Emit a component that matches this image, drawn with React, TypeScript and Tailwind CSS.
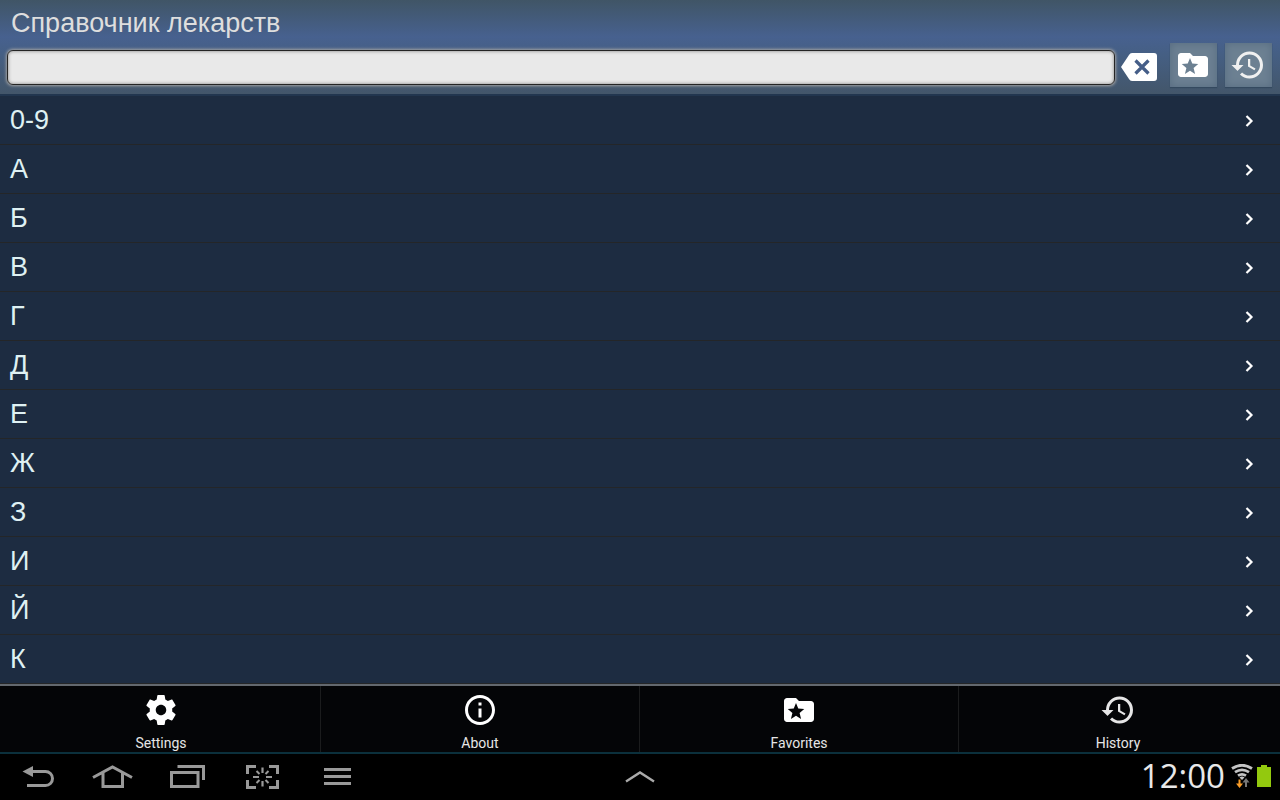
import { useState } from "react";
import type { ReactNode } from "react";
import { MdHistory, MdInfoOutline } from "react-icons/md";

const sections = ["0-9", "А", "Б", "В", "Г", "Д", "Е", "Ж", "З", "И", "Й", "К"];

function FolderStarIcon({ className }: { className?: string }) {
  return (
    <svg viewBox="0 0 24 24" className={className} fill="currentColor" aria-hidden="true">
      <path
        fillRule="evenodd"
        d="M20 6h-8l-2-2H4c-1.1 0-2 .9-2 2v12c0 1.1.9 2 2 2h16c1.1 0 2-.9 2-2V8c0-1.1-.9-2-2-2zM10 7.3l1.5 3.7 4 .4-3.1 2.6 1 4-3.4-2.1L6.6 18l1-4-3.1-2.6 4-.4z"
      />
    </svg>
  );
}

function GearIcon({ className }: { className?: string }) {
  return (
    <svg viewBox="0 0 24 24" className={className} fill="currentColor" aria-hidden="true">
      <path d="M19.43 12.98c.04-.32.07-.64.07-.98s-.03-.66-.07-.98l2.11-1.65c.19-.15.24-.42.12-.64l-2-3.46c-.12-.22-.39-.3-.61-.22l-2.49 1c-.52-.4-1.08-.73-1.69-.98l-.38-2.65C14.46 2.18 14.25 2 14 2h-4c-.25 0-.46.18-.49.42l-.38 2.65c-.61.25-1.17.59-1.69.98l-2.49-1c-.23-.09-.49 0-.61.22l-2 3.46c-.13.22-.07.49.12.64l2.11 1.65c-.04.32-.07.65-.07.98s.03.66.07.98l-2.11 1.65c-.19.15-.24.42-.12.64l2 3.46c.12.22.39.3.61.22l2.49-1c.52.4 1.08.73 1.69.98l.38 2.65c.03.24.24.42.49.42h4c.25 0 .46-.18.49-.42l.38-2.65c.61-.25 1.17-.59 1.69-.98l2.49 1c.23.09.49 0 .61-.22l2-3.46c.12-.22.07-.49-.12-.64l-2.11-1.65zM12 15.5c-1.93 0-3.5-1.57-3.5-3.5s1.57-3.5 3.5-3.5 3.5 1.57 3.5 3.5-1.57 3.5-3.5 3.5z" />
    </svg>
  );
}

function ClearIcon() {
  return (
    <svg viewBox="0 0 36 28" className="h-7 w-9" aria-hidden="true">
      <path d="M11 0H33a3 3 0 0 1 3 3V25a3 3 0 0 1-3 3H11Q9 28 8 26L0 14 8 2Q9 0 11 0z" fill="#fff" />
      <path d="M14.5 7.5l13 13M27.5 7.5l-13 13" stroke="#455e88" strokeWidth="3.2" />
    </svg>
  );
}

function Header() {
  const [query, setQuery] = useState("");

  return (
    <header className="bg-[linear-gradient(#405566_0px,#47618f_37px,#455f84_54px,#43566a_94px)]">
      <h1 className="h-[43px] pt-1 pl-[11px] text-[27px] leading-[38px] text-[#dedede]">
        Справочник лекарств
      </h1>
      <div className="flex h-[51px] items-start pr-2 pl-[7px]">
        <input
          type="text"
          aria-label="Поиск"
          value={query}
          onChange={(e) => setQuery(e.target.value)}
          className="mt-[7px] h-[35px] min-w-0 flex-1 rounded-md border border-[#252525] bg-[#e9e9e9] px-2 text-xl text-black shadow-[0_0_3px_1px_#a3a3a3,inset_0_0_3px_1px_#aaa] outline-none"
        />
        <button type="button" aria-label="Очистить" className="mt-[10px] ml-[6px]" onClick={() => setQuery("")}>
          <ClearIcon />
        </button>
        <button
          type="button"
          aria-label="Избранное"
          className="ml-[13px] flex h-11 w-[47px] items-center justify-center bg-[#6c8092] pr-0.5 text-white shadow-[0_1px_1px_#34495f,inset_0_0_8px_#566b80]"
        >
          <FolderStarIcon className="size-9" />
        </button>
        <button
          type="button"
          aria-label="История"
          className="ml-2 flex h-11 w-[47px] items-center justify-center bg-[#6c8092] pr-0.5 text-[#f0f0f0] shadow-[0_1px_1px_#34495f,inset_0_0_8px_#566b80]"
        >
          <MdHistory className="size-9" />
        </button>
      </div>
    </header>
  );
}

function MenuButton({ label, children }: { label: string; children: ReactNode }) {
  return (
    <button
      type="button"
      className="flex flex-1 flex-col items-center justify-start border-r border-[#1b1c1d] pt-[6px] pb-px font-[Roboto,sans-serif] text-sm leading-4 text-[#e6e6e6] last:border-transparent"
    >
      {children}
      <span className="mt-[7px]">{label}</span>
    </button>
  );
}

function NavButton({ label, children }: { label: string; children: ReactNode }) {
  return (
    <button type="button" aria-label={label} className="flex h-full w-[75px] items-center justify-center">
      <svg viewBox="0 0 43 30" className="h-[30px] w-[43px]" fill="none" stroke="#999" strokeWidth="3" aria-hidden="true">
        {children}
      </svg>
    </button>
  );
}

function SystemBar() {
  return (
    <footer className="grid h-[46px] grid-cols-[1fr_auto_1fr] items-center bg-black">
      <div className="flex h-full items-center">
        <NavButton label="Back">
          <path d="M15 9.5H29.5a7 7 0 0 1 0 14H11" />
          <path d="M6.5 9.5L17 4v11z" fill="#999" stroke="none" />
        </NavButton>
        <NavButton label="Home">
          <path d="M2 15.5L21.5 5 41 15.5M12 10V24.5H31.5V10" />
        </NavButton>
        <NavButton label="Recent apps">
          <path d="M5.5 10.5H32V24.5H5.5zM11.5 4.5H37.5V18" />
        </NavButton>
        <NavButton label="Screenshot">
          <path d="M6.5 12V4.5H15M28 4.5h8.5V12M36.5 18v7.5H28M15 25.5H6.5V18" />
          <path d="M21.5 5.5V11M21.5 19v5.5M12 15h6M25 15h6" strokeWidth="2.2" />
          <path d="M15.5 9l3 3M27.5 9l-3 3M15.5 21l3-3M27.5 21l-3-3" strokeWidth="2" />
        </NavButton>
        <NavButton label="Menu">
          <path d="M8 7.5H35M8 14.5H35M8 21.5H35" />
        </NavButton>
      </div>
      <button type="button" aria-label="Open tray">
        <svg viewBox="0 0 30 14" className="h-[14px] w-[30px]" fill="none" stroke="#aaa" strokeWidth="2.4" aria-hidden="true">
          <path d="M1 11.5L15 2.5l14 9" />
        </svg>
      </button>
      <div className="flex items-center justify-end pr-[9px]">
        <time className="pb-0.5 font-['Open_Sans',sans-serif] text-[33px] leading-[44px] text-[#e8e8e8]">12:00</time>
        <svg viewBox="0 0 22 26" className="ml-[6px] h-[26px] w-[22px]" fill="none" aria-hidden="true">
          <path d="M1 4.5Q11-2 21 4.5M4 8.2Q11 3.5 18 8.2M7 11.6Q11 9 15 11.6" stroke="#c4c4c4" strokeWidth="2.8" />
          <path d="M8.5 13.5q2.5-1.8 5 0L11 16z" fill="#c4c4c4" />
          <path d="M7.5 15.5h2V19.5H12L8.5 24 5 19.5h2.5z" fill="#fa9d28" />
          <path d="M14 23h2v-4.5h2.5L15 14l-3.5 4.5H14z" fill="#777" />
        </svg>
        <svg viewBox="0 0 14 24" className="ml-1 h-6 w-[14px]" fill="#93c90e" aria-hidden="true">
          <path d="M4 0h6v2h4v20H0V2h4z" />
        </svg>
      </div>
    </footer>
  );
}

export default function App() {
  return (
    <div className="flex h-screen flex-col overflow-hidden bg-black font-['Liberation_Sans',Arial,sans-serif]">
      <Header />
      <ul className="min-h-0 flex-1 overflow-hidden border-t-2 border-[#22364f] bg-[#1d2c41]">
        {sections.map((name) => (
          <li key={name}>
            <button
              type="button"
              className="flex h-[49px] w-full items-center justify-between border-b border-[#242628] pr-[26px] pl-[10px] text-[27px] text-[#dff1f3]"
            >
              {name}
              <svg viewBox="0 0 10 12" className="mt-0.5 h-3 w-[10px]" fill="none" stroke="#fff" strokeWidth="2.2" aria-hidden="true">
                <path d="M2.5 1l5 5-5 5" />
              </svg>
            </button>
          </li>
        ))}
      </ul>
      <nav className="flex h-[70px] border-t-2 border-b-2 border-t-[#63686e] border-b-[#0b303c] bg-[#040507] px-0.5">
        <MenuButton label="Settings">
          <GearIcon className="size-9 text-white" />
        </MenuButton>
        <MenuButton label="About">
          <MdInfoOutline className="size-9 text-white" />
        </MenuButton>
        <MenuButton label="Favorites">
          <FolderStarIcon className="size-9 text-white" />
        </MenuButton>
        <MenuButton label="History">
          <MdHistory className="size-9" />
        </MenuButton>
      </nav>
      <SystemBar />
    </div>
  );
}
